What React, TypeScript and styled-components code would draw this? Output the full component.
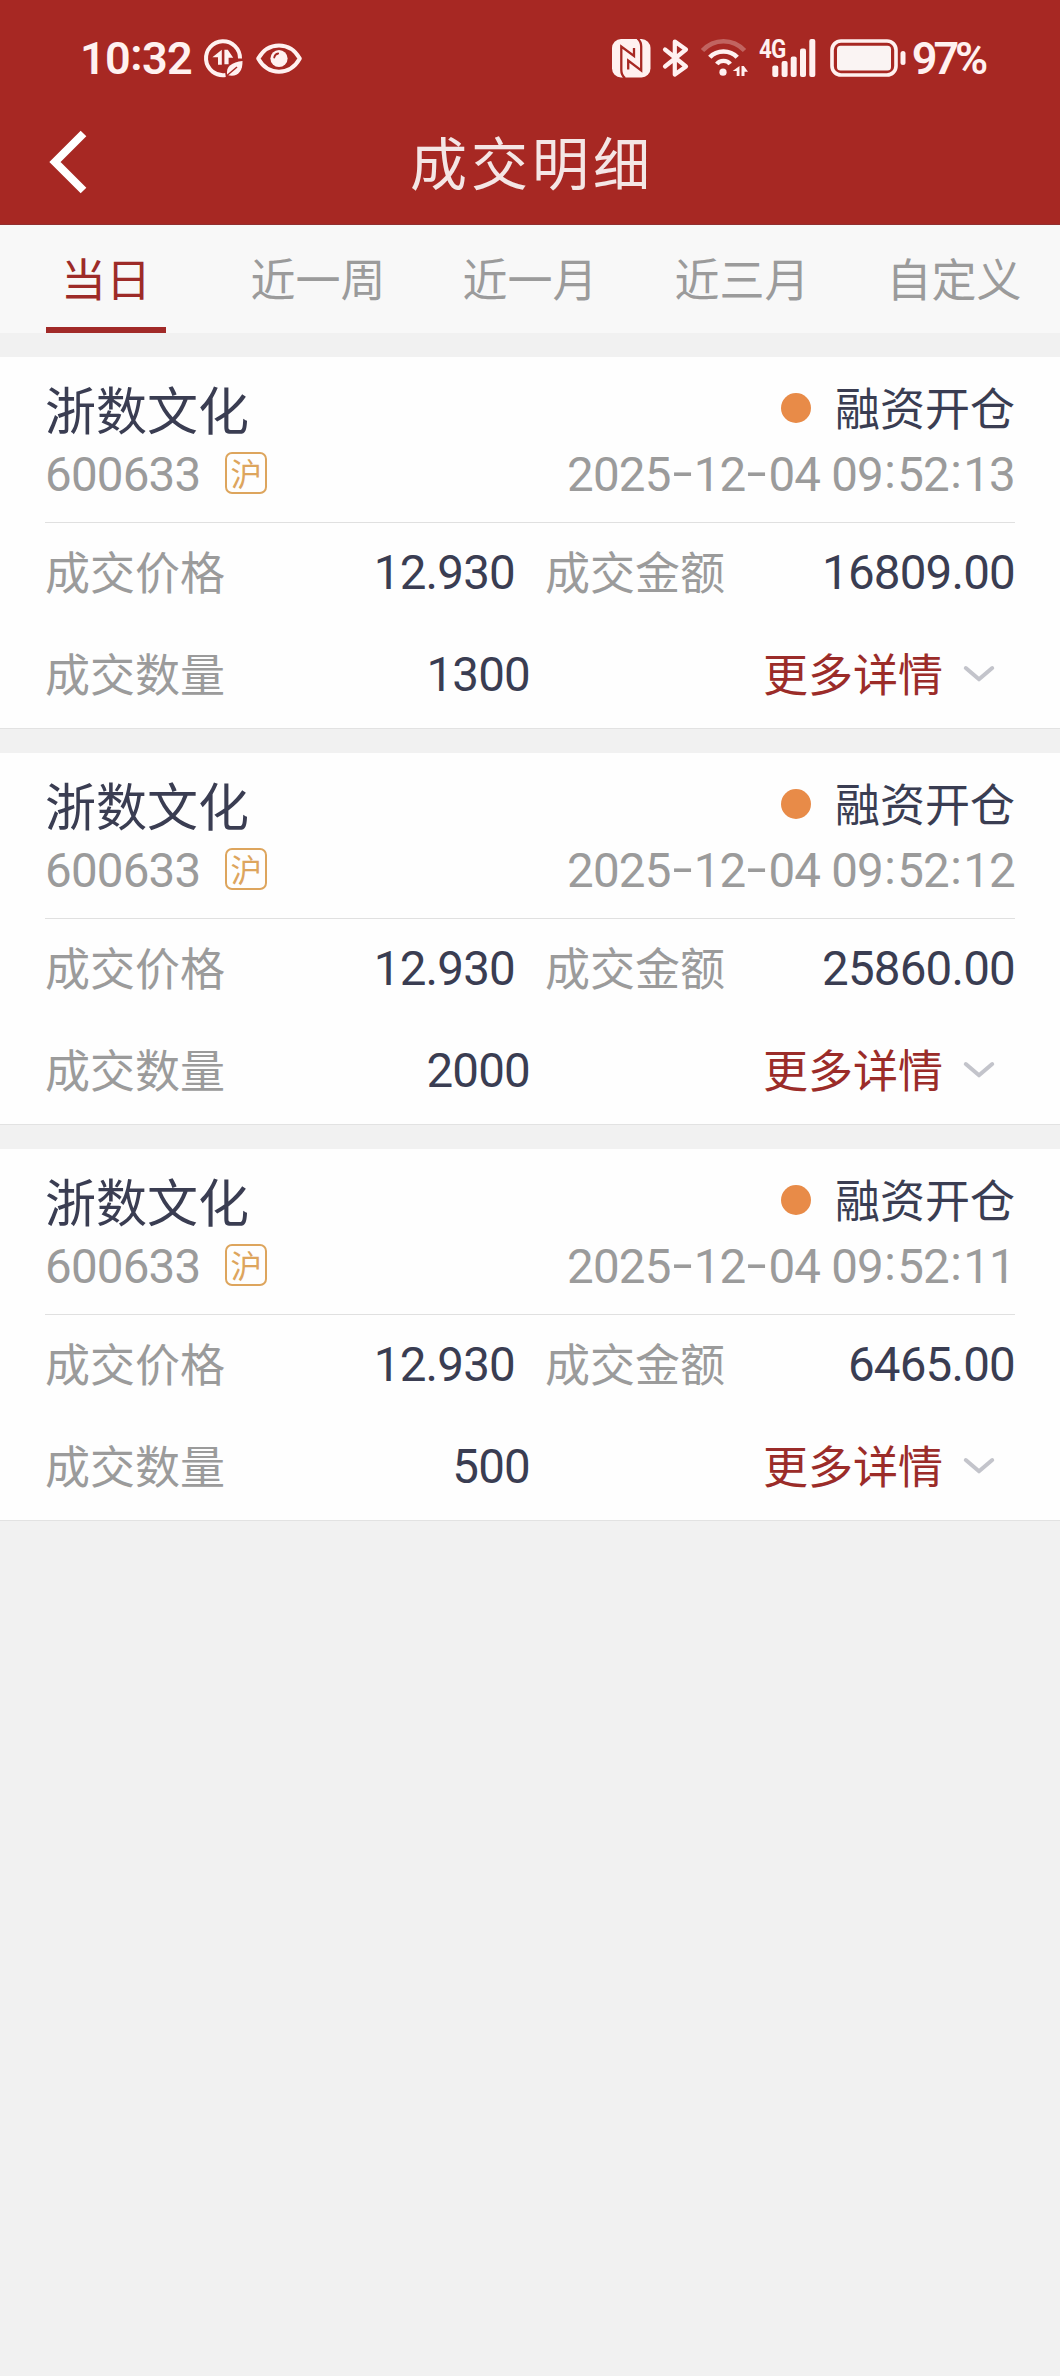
import React from "react";
import styled, { createGlobalStyle } from "styled-components";

const CJK = `"Noto Sans CJK SC", "Noto Sans", sans-serif`;
const DIGITS = `Roboto, "Noto Sans", sans-serif`;

const GlobalStyle = createGlobalStyle`
  * { box-sizing: border-box; }
  body {
    margin: 0;
    background: #f1f1f1;
    font-family: ${CJK};
    -webkit-font-smoothing: antialiased;
  }
`;

const Screen = styled.div`
  width: 1060px;
  min-height: 2376px;
  background: #f1f1f1;
`;

const Header = styled.header`
  height: 225px;
  background: #a72823;
  border-bottom: 1px solid #923030;
`;

const StatusBar = styled.div`
  display: flex;
  justify-content: space-between;
  height: 98px;
  padding: 18px 73px 0 80px;
  color: #fff1f0;
`;

const StatusGroup = styled.div<{ $width?: number }>`
  display: flex;
  align-items: center;
  width: ${(p) => (p.$width ? `${p.$width}px` : "auto")};
  height: 80px;
`;

const StatusText = styled.span<{ $spacing: number; $width: number; $gap?: number }>`
  flex: none;
  width: ${(p) => p.$width}px;
  margin-left: ${(p) => p.$gap ?? 0}px;
  padding-top: 1px;
  font-family: ${DIGITS};
  font-size: 45px;
  line-height: 80px;
  font-weight: 600;
  letter-spacing: ${(p) => p.$spacing}px;
  white-space: nowrap;
`;

const Glyph = styled.svg<{ $gap?: number }>`
  display: block;
  flex: none;
  margin-left: ${(p) => p.$gap ?? 0}px;
  overflow: visible;
`;

const TitleBar = styled.div`
  display: grid;
  grid-template-columns: 120px 1fr 120px;
  align-items: center;
  height: 126px;
`;

const BackButton = styled.button`
  display: flex;
  width: 90px;
  height: 90px;
  margin: 0 0 0 49px;
  padding: 2px 0 0;
  align-items: center;
  border: 0;
  background: none;
`;

const Title = styled.h1`
  margin: 0;
  padding: 0 0 3px 4px;
  color: #f4e6e5;
  font-size: 57px;
  font-weight: 400;
  line-height: 80px;
  letter-spacing: 4px;
  text-align: center;
`;

const Tabs = styled.nav`
  display: grid;
  grid-template-columns: repeat(5, 212px);
  height: 108px;
  background: #f8f8f8;
`;

const Tab = styled.div<{ $active?: boolean }>`
  display: flex;
  justify-content: center;
  width: ${(p) => (p.$active ? "120px" : "auto")};
  height: 108px;
  margin: ${(p) => (p.$active ? "0 auto" : "0")};
  padding-top: 2px;
  color: ${(p) => (p.$active ? "#9d2b28" : "#9b9b9b")};
  border-bottom: 6px solid ${(p) => (p.$active ? "#a12a28" : "transparent")};
  font-size: 45px;
  line-height: 101px;
  white-space: nowrap;
`;

const List = styled.main`
  display: flex;
  flex-direction: column;
  gap: 24px;
  padding-top: 24px;
`;

const Card = styled.article`
  height: 372px;
  padding: 18px 45px 0;
  background: #fefefe;
  border-bottom: 1px solid #e2e2e2;
`;

const Row = styled.div<{ $height: number }>`
  display: flex;
  align-items: center;
  justify-content: space-between;
  height: ${(p) => p.$height}px;
`;

const Cluster = styled.div`
  display: flex;
  align-items: center;
`;

const Divider = styled.div`
  height: 1px;
  margin-top: 17px;
  background: #e0e0e0;
`;

const StockName = styled.span`
  padding-bottom: 1px;
  color: #3a3d52;
  font-size: 51px;
  line-height: 60px;
`;

const Label = styled.span<{ $tone?: "dark" | "red" }>`
  padding-bottom: 2px;
  color: ${(p) => (p.$tone === "dark" ? "#3a3d52" : p.$tone === "red" ? "#9b2c29" : "#9b9b9b")};
  font-size: 45px;
  line-height: 60px;
  white-space: nowrap;
`;

const Num = styled.span<{ $muted?: boolean }>`
  display: flex;
  padding-top: ${(p) => (p.$muted ? 3 : 1)}px;
  color: ${(p) => (p.$muted ? "#9b9b9b" : "#3a3d52")};
  font-family: ${DIGITS};
  font-size: 47.5px;
  line-height: 60px;
  letter-spacing: -0.8px;
  white-space: pre;
`;

const Dash = styled.span`
  width: 23px;
  text-align: center;
  letter-spacing: 0;
  transform: translateY(-2.5px) scaleX(1.5);
`;

const Colon = styled.span`
  width: 14.2px;
  text-align: center;
  letter-spacing: 0;
  transform: translateY(-3.5px);
`;

const ClockColon = styled.span`
  display: inline-block;
  transform: translateY(-4px);
`;

const MarketTag = styled.span`
  display: flex;
  align-items: center;
  justify-content: center;
  width: 42px;
  height: 42px;
  margin-left: 25px;
  border: 2px solid #dda55d;
  border-radius: 7px;
  color: #dda55d;
  font-size: 31.5px;
  line-height: 34px;
  padding-bottom: 3px;
`;

const Dot = styled.i`
  width: 30px;
  height: 30px;
  margin-right: 24px;
  border-radius: 50%;
  background: #e88b48;
`;

const Field = styled.div<{ $width: number }>`
  display: flex;
  align-items: center;
  justify-content: space-between;
  width: ${(p) => p.$width}px;
`;

const More = styled.button`
  display: flex;
  align-items: center;
  margin: 0;
  padding: 0 21px 0 0;
  border: 0;
  background: none;
  font-family: inherit;
`;

interface Trade {
  time: string;
  amount: string;
  quantity: string;
}

const trades: Trade[] = [
  { time: "09:52:13", amount: "16809.00", quantity: "1300" },
  { time: "09:52:12", amount: "25860.00", quantity: "2000" },
  { time: "09:52:11", amount: "6465.00", quantity: "500" },
];

const tabs = ["当日", "近一周", "近一月", "近三月", "自定义"];

const DataSaverIcon = () => (
  <Glyph $gap={0} width="39" height="39" viewBox="0 0 39 39" fill="none">
    <path d="M36 19.500A17 17 0 1 0 21.500 36" stroke="currentColor" strokeWidth="4" />
    <path d="M17.800 10.800v15h-3.800v-7.600H8.400zM20.400 10.800h3.400l5.400 8h-4.600v6.400h-4.200z" fill="currentColor" />
    <path d="M23.200 36C21.500 27.500 28 23 38.500 22 38.800 33 33 38.800 23.200 36z" fill="currentColor" />
    <path d="M23 36.500 33 28" stroke="#a72823" strokeWidth="1.500" />
  </Glyph>
);

const EyeIcon = () => (
  <Glyph $gap={12.7} width="46" height="31" viewBox="0 0 46 31" fill="none">
    <path d="M2.200 15.500C12-2 34-2 43.800 15.500 34 33 12 33 2.200 15.500z" stroke="currentColor" strokeWidth="4" strokeLinejoin="round" />
    <circle cx="23" cy="15.500" r="8.600" fill="currentColor" />
    <path d="M18.200 14.500a5 5 0 0 1 4-4" stroke="#a72823" strokeWidth="1.800" strokeLinecap="round" />
  </Glyph>
);

const NfcIcon = () => (
  <Glyph width="39" height="39" viewBox="0 0 39 39" fill="none">
    <rect width="38.500" height="38.500" rx="9" fill="currentColor" />
    <g stroke="#a72823" strokeWidth="2.300">
      <path d="M13 39.200Q9.300 36 9.300 31V7.500L22 17V9" />
      <path d="M25.500-.7Q29.200 2.500 29.200 7.500V31.500L16.200 21.500V30.500" />
    </g>
  </Glyph>
);

const BluetoothIcon = () => (
  <Glyph $gap={12} width="26" height="38" viewBox="0 0 26 38" fill="none">
    <path d="M2 10.500 23 27.500 11.800 35.500V2.500L23 10.500 2 27.500" stroke="currentColor" strokeWidth="4.200" strokeLinejoin="round" strokeLinecap="round" />
  </Glyph>
);

const WifiIcon = () => (
  <Glyph $gap={11.7} width="48" height="38" viewBox="0 0 48 38" fill="none" stroke="currentColor">
    <path d="M2.500 11.500C14-1 33-1 44.500 11.500" strokeWidth="4.500" opacity=".3" />
    <path d="M9.800 18.200C17 10.500 30 10.500 37.200 18.200" strokeWidth="4.600" />
    <path d="M16.800 25C20 20.800 27 20.800 30.200 25" strokeWidth="4.400" />
    <circle cx="23" cy="33.200" r="3.600" fill="currentColor" stroke="none" />
    <path d="M39.500 27v10h-2.800v-5h-4zM41.500 27h2.300l4.200 5.800h-3.500V37h-3z" fill="currentColor" stroke="none" />
  </Glyph>
);

const SignalGroup = styled.div`
  position: relative;
  flex: none;
  width: 57px;
  height: 38px;
  margin-left: 11px;
`;

const Network = styled.span`
  position: absolute;
  left: 0;
  top: -1px;
  font-family: ${DIGITS};
  font-size: 26px;
  font-weight: 700;
  line-height: 22px;
  letter-spacing: -1px;
  transform: scaleX(0.86);
  transform-origin: left;
`;

const SignalIcon = () => (
  <SignalGroup>
    <Glyph width="57" height="38" viewBox="0 0 57 38" fill="currentColor">
      <rect x="13.300" y="26.500" width="6" height="11.500" rx="2" />
      <rect x="22.600" y="22" width="6" height="16" rx="2" />
      <rect x="31.700" y="17.500" width="6" height="20.500" rx="2" />
      <rect x="41" y="9.500" width="6" height="28.500" rx="2" />
      <rect x="50.300" y="0" width="6" height="38" rx="2" />
    </Glyph>
    <Network>4G</Network>
  </SignalGroup>
);

const BatteryIcon = () => (
  <Glyph $gap={13.5} width="76" height="38" viewBox="0 0 76 38" fill="none">
    <rect x="2" y="2" width="64" height="34" rx="9" stroke="currentColor" strokeWidth="3.600" />
    <rect x="7" y="6.800" width="54" height="24.600" rx="3.500" fill="#faf4f3" />
    <rect x="70.500" y="12" width="5" height="14" rx="2.500" fill="currentColor" />
  </Glyph>
);

const Timestamp = ({ value }: { value: string }) => (
  <Num $muted>
    {value.split(/([-:])/).map((part, i) =>
      part === "-" ? <Dash key={i}>-</Dash> : part === ":" ? <Colon key={i}>:</Colon> : <span key={i}>{part}</span>
    )}
  </Num>
);

const TradeCard = ({ trade }: { trade: Trade }) => (
  <Card>
    <Row $height={66}>
      <StockName>浙数文化</StockName>
      <Cluster>
        <Dot />
        <Label $tone="dark">融资开仓</Label>
      </Cluster>
    </Row>
    <Row $height={64}>
      <Cluster>
        <Num $muted>600633</Num>
        <MarketTag>沪</MarketTag>
      </Cluster>
      <Timestamp value={`2025-12-04 ${trade.time}`} />
    </Row>
    <Divider />
    <Row $height={98}>
      <Field $width={470}>
        <Label>成交价格</Label>
        <Num>12.930</Num>
      </Field>
      <Field $width={470}>
        <Label>成交金额</Label>
        <Num>{trade.amount}</Num>
      </Field>
    </Row>
    <Row $height={106}>
      <Field $width={485}>
        <Label>成交数量</Label>
        <Num>{trade.quantity}</Num>
      </Field>
      <More>
        <Label $tone="red">更多详情</Label>
        <Glyph $gap={21} width="30" height="16" viewBox="0 0 30 16" fill="none">
          <path d="M1.800 2 15 13.300 28.200 2" stroke="#c3c4cb" strokeWidth="4" strokeLinecap="round" strokeLinejoin="round" />
        </Glyph>
      </More>
    </Row>
  </Card>
);

export default function App() {
  return (
    <Screen>
      <GlobalStyle />
      <Header>
        <StatusBar>
          <StatusGroup>
            <StatusText $spacing={-0.6} $width={124.3}>
              10<ClockColon>:</ClockColon>32
            </StatusText>
            <DataSaverIcon />
            <EyeIcon />
          </StatusGroup>
          <StatusGroup $width={375.5}>
            <NfcIcon />
            <BluetoothIcon />
            <WifiIcon />
            <SignalIcon />
            <BatteryIcon />
            <StatusText $spacing={-4} $width={76} $gap={6}>97%</StatusText>
          </StatusGroup>
        </StatusBar>
        <TitleBar>
          <BackButton aria-label="返回">
            <Glyph width="38" height="62" viewBox="0 0 38 62" fill="none">
              <path d="M34.500 2.500 6 31 34.500 59.500" stroke="#ffffff" strokeWidth="8" />
            </Glyph>
          </BackButton>
          <Title>成交明细</Title>
        </TitleBar>
      </Header>
      <Tabs>
        {tabs.map((name, i) => (
          <Tab key={name} $active={i === 0}>{name}</Tab>
        ))}
      </Tabs>
      <List>
        {trades.map((trade) => (
          <TradeCard key={trade.time} trade={trade} />
        ))}
      </List>
    </Screen>
  );
}
